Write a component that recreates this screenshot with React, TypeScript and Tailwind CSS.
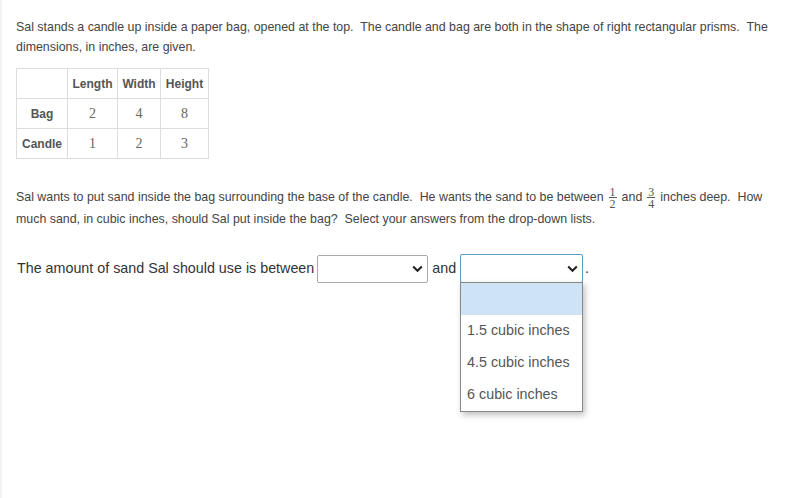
import React from "react";

const Chevron = () => (
  <svg width="11" height="8" viewBox="0 0 11 8" className="shrink-0">
    <path d="M1.2 1.5 L5.5 5.8 L9.8 1.5" fill="none" stroke="#222" strokeWidth="2" />
  </svg>
);

const Frac = ({ n, d }: { n: string; d: string }) => (
  <span className="inline-block align-middle mx-[5px] text-center font-['Liberation_Serif',serif] text-[12px] leading-[10px] text-[#555]">
    <span className="block px-[1px]">{n}</span>
    <span className="block px-[1px] pt-[1px] border-t border-[#555]">{d}</span>
  </span>
);

const rows = [
  { name: "Bag", l: "2", w: "4", h: "8" },
  { name: "Candle", l: "1", w: "2", h: "3" },
];

const options = ["1.5 cubic inches", "4.5 cubic inches", "6 cubic inches"];

export default function App() {
  return (
    <div className="w-[791px] h-[498px] bg-white border-l-2 border-[#f2f2f2] font-['Liberation_Sans',Arial,sans-serif] text-[#444] overflow-hidden">
      <div className="pl-[14px] pr-4 pt-[17px]">
        <p className="text-[12.4px] leading-[20px]">
          Sal stands a candle up inside a paper bag, opened at the top.{"\u00a0 "}The candle and bag are both in the shape of
          right rectangular prisms.{"\u00a0 "}The dimensions, in inches, are given.
        </p>

        <table className="mt-[11px] border-collapse text-[12px] text-[#555]">
          <thead>
            <tr className="h-[30px]">
              <th className="w-[51px] border border-[#ddd]"></th>
              <th className="w-[50px] border border-[#ddd] font-bold">Length</th>
              <th className="w-[43px] border border-[#ddd] font-bold">Width</th>
              <th className="w-[48px] border border-[#ddd] font-bold">Height</th>
            </tr>
          </thead>
          <tbody>
            {rows.map((r) => (
              <tr key={r.name} className="h-[30px]">
                <td className="border border-[#ddd] text-center font-bold">{r.name}</td>
                <td className="border border-[#ddd] text-center font-['Liberation_Serif',serif] text-[14px] text-[#666]">{r.l}</td>
                <td className="border border-[#ddd] text-center font-['Liberation_Serif',serif] text-[14px] text-[#666]">{r.w}</td>
                <td className="border border-[#ddd] text-center font-['Liberation_Serif',serif] text-[14px] text-[#666]">{r.h}</td>
              </tr>
            ))}
          </tbody>
        </table>

        <p className="mt-[28px] text-[12.4px] leading-[21px]">
          Sal wants to put sand inside the bag surrounding the base of the candle.{"\u00a0 "}He wants the sand to be between
          <Frac n="1" d="2" />
          and
          <Frac n="3" d="4" />
          inches deep.{"\u00a0 "}How much sand, in cubic inches, should Sal put inside the bag?{"\u00a0 "}Select your answers
          from the drop-down lists.
        </p>

        <div className="mt-[24px] flex items-center text-[14.3px] text-[#333]">
          <span className="ml-[1px]">The amount of sand Sal should use is between</span>
          <div className="ml-[3px] w-[111px] h-[28px] border border-[#aaa] rounded-[2px] flex items-center justify-end pr-[4px]">
            <Chevron />
          </div>
          <span className="ml-[4px]">and</span>
          <div className="relative ml-[4px]">
            <div className="w-[123px] h-[29px] border border-[#5a9ec4] rounded-[2px] flex items-center justify-end pr-[4px]">
              <Chevron />
            </div>
            <ul className="absolute left-0 top-[28px] w-[123px] border border-[#888] bg-white shadow-[2px_3px_6px_rgba(0,0,0,0.25)] text-[14.3px] text-[#555]">
              <li className="h-[32px] bg-[#cfe3f7]"></li>
              {options.map((o) => (
                <li key={o} className="h-[32px] pl-[6px] flex items-center">
                  {o}
                </li>
              ))}
            </ul>
          </div>
          <span className="ml-[2px]">.</span>
        </div>
      </div>
    </div>
  );
}
